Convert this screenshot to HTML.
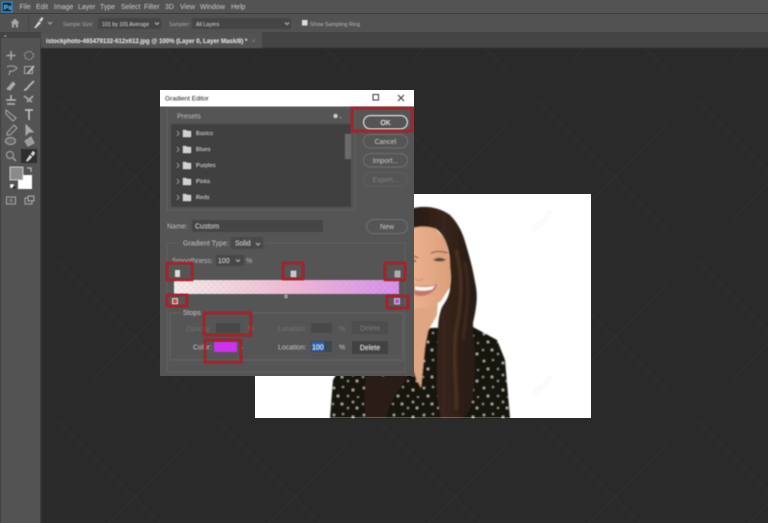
<!DOCTYPE html>
<html><head><meta charset="utf-8"><style>
html,body{margin:0;padding:0;background:#2a2a2a;width:768px;height:523px;overflow:hidden}
svg{display:block}
text{font-family:"Liberation Sans",sans-serif;fill:#c8c8c8}
</style></head><body>
<svg width="768" height="523" viewBox="0 0 768 523" xmlns="http://www.w3.org/2000/svg">
<defs>
<filter id="b" x="-5%" y="-5%" width="110%" height="110%"><feGaussianBlur stdDeviation="0.45"/></filter>
<filter id="b1" x="-5%" y="-5%" width="110%" height="110%"><feGaussianBlur stdDeviation="0.8"/></filter>
<filter id="b2" x="-30%" y="-10%" width="160%" height="120%"><feGaussianBlur stdDeviation="1"/></filter>
<pattern id="wm" width="160" height="160" patternUnits="userSpaceOnUse" x="42" y="255">
<path d="M15 5L145 135M145 30L50 125" stroke="#fff" stroke-opacity=".018" stroke-width="1.500" fill="none"/>
</pattern>
<pattern id="ck" width="6" height="6" patternUnits="userSpaceOnUse" x="174" y="280">
<rect width="3" height="3" fill="#c9c9c9" fill-opacity=".3"/><rect x="3" y="3" width="3" height="3" fill="#c9c9c9" fill-opacity=".3"/>
</pattern>
<pattern id="dots" width="30" height="27" patternUnits="userSpaceOnUse" x="330" y="330">
<g fill="#d8d8d4" fill-opacity=".85"><circle cx="4" cy="4" r="1.100"/><circle cx="13" cy="3" r=".9"/><circle cx="23" cy="6" r="1.200"/><circle cx="28" cy="13" r=".8"/><circle cx="8" cy="12" r="1.200"/><circle cx="18" cy="12" r=".9"/><circle cx="3" cy="20" r=".9"/><circle cx="12" cy="20" r="1.200"/><circle cx="23" cy="18" r="1"/><circle cx="27" cy="24" r="1.200"/><circle cx="18" cy="24" r=".9"/></g>
</pattern>
<linearGradient id="gr" x1="0" x2="1" y1="0" y2="0"><stop offset="0" stop-color="#f6efec"/><stop offset=".5" stop-color="#f4b8d4"/><stop offset="1" stop-color="#d884f0"/></linearGradient>
<linearGradient id="skin" x1="0" x2="1" y1="0" y2="0"><stop offset="0" stop-color="#eab28e"/><stop offset="1" stop-color="#dd9f7c"/></linearGradient>
<linearGradient id="hairg" x1="0" x2="1" y1="0" y2="0"><stop offset="0" stop-color="#261812"/><stop offset=".5" stop-color="#38251b"/><stop offset="1" stop-color="#261912"/></linearGradient>
</defs>

<rect width="768" height="523" fill="#2a2a2a"/>
<rect width="768" height="523" fill="url(#wm)"/>

<!-- chrome -->
<rect width="768" height="13" fill="#535353"/>
<rect y="13" width="768" height="1" fill="#3d3d3d"/>
<rect y="14" width="768" height="18" fill="#525252"/>
<rect y="32" width="768" height="16" fill="#444"/>
<rect y="47.500" width="768" height="1" fill="#333"/>

<!-- image -->
<rect x="255" y="194" width="336" height="224" fill="#fff"/>
<g filter="url(#b1)">
<!-- shirt -->
<path d="M330 418L333 380L345 360L400 345L430 328L473 327L497 340L505 360L510 418Z" fill="#16130f"/>
<path d="M330 418L333 380L345 360L400 345L430 328L473 327L497 340L505 360L510 418Z" fill="url(#dots)"/>
<!-- neck/V -->
<path d="M410 300L438 300L437 315L428 331L425 347L421 388L416 378L410 360Z" fill="#dfa683"/>
<!-- face -->
<path d="M410 226L433 226L446 240L451 267L450 287L441 301L432 307L410 309Z" fill="url(#skin)"/>
<!-- hair -->
<path d="M410 209C420 206 436 205 450 215C458 223 463 233 466 245C470 258 473 270 475 282C478 295 477 305 473 323C473 335 475 345 475 357C475 375 474 390 472 403C470 410 467 414 463 418L441 418C438 405 436 390 437 377C437 360 437 345 438 330C438 320 440 312 442 307C447 300 450 294 450 287C451 280 451 273 450 267C450 255 448 247 445 240C441 232 436 228 433 228C426 226 418 226 410 229Z" fill="url(#hairg)"/>
<path d="M456 250C463 275 462 300 456 330C452 360 458 390 456 410" stroke="#6a4a35" stroke-width="3" fill="none" opacity=".5" filter="url(#b2)"/>
<path d="M465 262C470 285 468 305 463 340" stroke="#5a3e2c" stroke-width="3" fill="none" opacity=".45" filter="url(#b2)"/>
<!-- left lower hair -->
<path d="M366 376L408 376C402 385 394 395 390 405C388 411 387 415 386 418L366 418C364 405 364 390 366 376Z" fill="#2c1c15"/>
<!-- mouth -->
<path d="M414 285C424 287 432 286 437 284C436 291 429 296 420 296C417 296 415 295 414 294Z" fill="#c2766c"/>
<path d="M415 286C423 288 430 287 435 285.500L432 289.500C426 291 420 291 415 290Z" fill="#fbf6f0"/>
<!-- eyes/brows -->
<path d="M433 260C437 257 442 257 446 260C442 262 437 262 433 260Z" fill="#5a473a"/>
<path d="M431 253C436 251 442 251 448 253" stroke="#7a5540" stroke-width="1.100" fill="none"/>
<path d="M410 258C413 256 416 256 418 258" stroke="#7a5540" stroke-width="1.100" fill="none"/>
<path d="M410 261H416" stroke="#6d5849" stroke-width="1.800"/>
<path d="M415 279C418 281 421 281 423 278" stroke="#c68a68" stroke-width="1" fill="none"/>
<text x="535" y="232" font-size="9" font-weight="bold" transform="rotate(-45 535 232)" style="fill:#f6f6f6">iStock</text>
<text x="535" y="397" font-size="9" font-weight="bold" transform="rotate(-45 535 397)" style="fill:#f6f6f6">iStock</text>
</g>

<!-- toolbar -->
<rect x="0" y="32" width="40" height="491" fill="#535353"/>
<rect x="0" y="32" width="1.200" height="491" fill="#444"/>
<rect x="40" y="48" width="1.500" height="475" fill="#3c3c3c"/>
<rect x="0" y="32" width="40" height="6" fill="#444"/>
<text x="4" y="37.500" font-size="5" style="fill:#bbb">«</text>

<g filter="url(#b)">
<!-- PS logo + menu -->
<rect x="2" y="2" width="10" height="10" fill="#0d2a38" stroke="#31a8ff" stroke-width=".8"/>
<text x="3.800" y="9.600" font-size="6.500" font-weight="bold" style="fill:#5cc0f5">Ps</text>
<g font-size="7">
<text x="19.500" y="9">File</text><text x="36" y="9">Edit</text><text x="54" y="9">Image</text><text x="78" y="9">Layer</text><text x="100" y="9">Type</text><text x="121" y="9">Select</text><text x="144" y="9">Filter</text><text x="165" y="9">3D</text><text x="180" y="9">View</text><text x="200" y="9">Window</text><text x="231" y="9">Help</text>
</g>
<!-- option bar -->
<path d="M15 18.500L10.500 23H12V27.500H14V24.500H16V27.500H18V23H19.500Z" fill="#a8a8a8"/>
<rect x="28" y="15" width="1" height="16" fill="#444"/>
<path d="M34 28L39 21L41 23L36 28ZM39 20L42 17L43.500 18.500L41 22Z" fill="#d8d8d8"/>
<path d="M48 22L50 24L52 22" stroke="#aaa" fill="none"/>
<text x="63" y="26" font-size="5.200" style="fill:#aaa">Sample Size:</text>
<rect x="98" y="18" width="63" height="11" fill="#454545"/>
<text x="102" y="26" font-size="5.300" style="fill:#c4c4c4">101 by 101 Average</text>
<path d="M155 22.500L157 24.500L159 22.500" stroke="#aaa" fill="none"/>
<text x="169" y="26" font-size="5.300" style="fill:#aaa">Sampler:</text>
<rect x="192" y="18" width="99" height="11" fill="#454545"/>
<text x="196" y="26" font-size="5.300" style="fill:#c4c4c4">All Layers</text>
<path d="M285 22.500L287 24.500L289 22.500" stroke="#aaa" fill="none"/>
<rect x="302" y="20" width="5.500" height="5.500" fill="#ddd"/>
<text x="310" y="26" font-size="5.400" style="fill:#b8b8b8">Show Sampling Ring</text>
<!-- tab -->
<rect x="41" y="32" width="221" height="16" fill="#535353"/>
<text x="46" y="43" font-size="6.100" font-weight="bold" style="fill:#dcdcdc">istockphoto-465479132-612x612.jpg @ 100% (Layer 0, Layer Mask/8) *</text>
<text x="252" y="43" font-size="6" style="fill:#888">×</text>

<!-- tools -->
<g stroke="#aaa" stroke-width="1" fill="none">
<path d="M11 51V60M6.500 55.500H15.500" stroke-width="1.500"/>
<ellipse cx="29" cy="55.500" rx="4.500" ry="4" stroke-dasharray="2 1"/>
<path d="M7 67C10 65 15 66 17 68C15 71 11 72 10 71L9 75"/>
<rect x="24.500" y="66.500" width="8" height="7"/><path d="M28 73L34 66" stroke-width="1.500" stroke="#ccc"/>
<path d="M7 89L13 82L15 84L10 90Z" fill="#aaa"/>
<path d="M24 90C27 90 28 87 29 86L34 81" stroke-width="1.800" stroke="#bbb"/>
<path d="M6 100H16M7 104H15M11 95V100" stroke-width="1.500" stroke="#bbb"/>
<path d="M24 96L32 102M27 102L33 96" stroke-width="2" stroke="#a0a0a0"/>
<path d="M6 110L16 118L13 121L6 114Z"/>
<path d="M25 110H33M29 110V120" stroke-width="1.500" stroke="#ccc"/>
<path d="M7 133L14 125L17 128L10 135L7 135Z"/>
<path d="M26 125V135L29 132L33 132Z" fill="#aaa"/>
<ellipse cx="10.500" cy="141" rx="5" ry="3.500" fill="#666"/>
<path d="M25 141L31 137L34 143L28 146Z" fill="#999"/>
<circle cx="10" cy="155" r="3.500"/><path d="M13 158L16 161" stroke-width="1.500"/>
</g>
<rect x="21" y="149" width="16" height="14" fill="#2f2f2f"/>
<path d="M26 161L30 155L32 157L28 161ZM31 154L33 151L35 153L33 156Z" fill="#ddd"/>
<!-- colors -->
<rect x="18" y="175" width="14" height="14" fill="#fff"/>
<rect x="10" y="167" width="13" height="13" fill="#8a8a8a" stroke="#ddd" stroke-width=".8"/>
<path d="M27 168H31V172" stroke="#ccc" fill="none"/>
<rect x="10" y="184" width="4" height="4" fill="#fff" stroke="#333" stroke-width=".5"/>
<rect x="12.500" y="186" width="3" height="3" fill="#333"/>
<rect x="6.500" y="197" width="9" height="7" fill="none" stroke="#aaa"/><circle cx="11" cy="200.500" r="2" fill="#777"/>
<rect x="25" y="198" width="7" height="6" fill="none" stroke="#aaa"/><rect x="28" y="196" width="6" height="5" fill="#535353" stroke="#aaa"/>
</g>

<!-- dialog -->
<rect x="160" y="90" width="254" height="286" fill="#555"/>
<rect x="160" y="90" width="254" height="16.500" fill="#fff"/>
<g filter="url(#b)">
<text x="165" y="100.500" font-size="6.500" style="fill:#222">Gradient Editor</text>
<rect x="373" y="94.500" width="5.500" height="5.500" fill="none" stroke="#333"/>
<path d="M398 95L404 101M404 95L398 101" stroke="#333" fill="none"/>
<path d="M167 210V108H355V210Z" fill="none" stroke="#5e5e5e"/>
<rect x="171" y="124" width="180" height="83" fill="#414141"/>
<text x="177" y="118.500" font-size="7" style="fill:#bdbdbd">Presets</text>
<circle cx="335.500" cy="116" r="2.200" fill="#ccc"/>
<rect x="340" y="117" width="1" height="1" fill="#ccc"/>
<rect x="345" y="134" width="6" height="25" fill="#6a6a6a"/>
<g font-size="5.800">
<text x="196" y="135">Basics</text><text x="196" y="151">Blues</text><text x="196" y="167">Purples</text><text x="196" y="183">Pinks</text><text x="196" y="199">Reds</text>
</g>
<g fill="#d0d0d0">
<path d="M183 130H186L187 131H191V137H183Z"/><path d="M183 146H186L187 147H191V153H183Z"/><path d="M183 162H186L187 163H191V169H183Z"/><path d="M183 178H186L187 179H191V185H183Z"/><path d="M183 194H186L187 195H191V201H183Z"/>
</g>
<g stroke="#999" fill="none" stroke-width=".8">
<path d="M177 131L179 133.500L177 136M177 147L179 149.500L177 152M177 163L179 165.500L177 168M177 179L179 181.500L177 184M177 195L179 197.500L177 200"/>
</g>
<!-- buttons -->
<rect x="363.500" y="115.500" width="44" height="13.500" rx="6.700" fill="#555" stroke="#e6e6e6"/>
<text x="385.500" y="125" font-size="7" text-anchor="middle" style="fill:#eee">OK</text>
<rect x="363.500" y="134.500" width="44" height="13.500" rx="6.700" fill="none" stroke="#707070"/>
<text x="385.500" y="144" font-size="7" text-anchor="middle">Cancel</text>
<rect x="363.500" y="153.500" width="44" height="13.500" rx="6.700" fill="none" stroke="#707070"/>
<text x="385.500" y="163" font-size="7" text-anchor="middle">Import...</text>
<rect x="363.500" y="172.500" width="44" height="13.500" rx="6.700" fill="none" stroke="#5e5e5e"/>
<text x="385.500" y="182" font-size="7" text-anchor="middle" style="fill:#7c7c7c">Export...</text>
<!-- name -->
<text x="167" y="228.500" font-size="7" style="fill:#bdbdbd">Name:</text>
<rect x="192" y="220" width="131" height="12" fill="#444"/>
<text x="195" y="228.500" font-size="7" style="fill:#c4c4c4">Custom</text>
<rect x="366.500" y="219.500" width="41" height="14" rx="7" fill="none" stroke="#707070"/>
<text x="387" y="229" font-size="7" text-anchor="middle">New</text>
<path d="M180 243H167V372H405V243H266" fill="none" stroke="#5e5e5e"/>
<text x="183" y="245.500" font-size="7" style="fill:#c4c4c4">Gradient Type:</text>
<rect x="231" y="237" width="32" height="12" fill="#484848"/>
<text x="235" y="245.500" font-size="7">Solid</text>
<path d="M256 243L258 245L260 243" stroke="#aaa" fill="none"/>
<text x="172" y="263" font-size="7" style="fill:#b8b8b8">Smoothness:</text>
<rect x="216" y="255" width="28" height="11" fill="#474747"/>
<text x="218" y="263" font-size="7">100</text>
<path d="M236 259.500L238 261.500L240 259.500" stroke="#aaa" fill="none"/>
<text x="246" y="263" font-size="7" style="fill:#bbb">%</text>
<!-- gradient -->
<rect x="174" y="280" width="225" height="14" fill="url(#gr)"/>
<rect x="174" y="280" width="225" height="14" fill="url(#ck)"/>
<rect x="175" y="270" width="5" height="7" fill="#ddd"/>
<rect x="291" y="271" width="5" height="6" fill="#c8c8c8" stroke="#eee" stroke-width=".5"/>
<rect x="395" y="271" width="5" height="6" fill="#aaa" stroke="#ddd" stroke-width=".5"/>
<circle cx="286" cy="296.500" r="1.300" fill="none" stroke="#ccc" stroke-width=".8"/>
<rect x="172.500" y="298.500" width="5" height="5.500" fill="#c44" stroke="#eee" stroke-width=".8"/>
<rect x="394.500" y="298.500" width="5" height="5.500" fill="#b050e0" stroke="#ddd" stroke-width=".8"/>
<!-- stops -->
<path d="M180 313H170V360H403V313H202" fill="none" stroke="#646464"/>
<text x="183" y="315" font-size="7" style="fill:#c8c8c8">Stops</text>
<text x="186" y="331" font-size="7" style="fill:#6e6e6e">Opacity:</text>
<rect x="216" y="323" width="24" height="10" fill="#464646"/>
<text x="248" y="331" font-size="7" style="fill:#777">%</text>
<text x="278" y="331" font-size="7" style="fill:#757575">Location:</text>
<rect x="311" y="323" width="21" height="10" fill="#484848"/>
<text x="339" y="331" font-size="7" style="fill:#777">%</text>
<rect x="352" y="321" width="36" height="13" fill="#4d4d4d"/>
<text x="370" y="330.500" font-size="7" text-anchor="middle" style="fill:#777">Delete</text>
<text x="193" y="349.500" font-size="7" style="fill:#c4c4c4">Color:</text>
<rect x="214" y="342" width="23" height="10" fill="#cc33f0"/>
<rect x="241" y="347" width="1.500" height="1.500" fill="#bbb"/>
<text x="278" y="349.500" font-size="7" style="fill:#c4c4c4">Location:</text>
<rect x="311" y="341" width="21" height="11" fill="#3c4650"/>
<rect x="312" y="342" width="12" height="9" fill="#1f66b8"/>
<text x="312" y="349.500" font-size="7" style="fill:#eee">100</text>
<text x="339" y="349.500" font-size="7" style="fill:#c4c4c4">%</text>
<rect x="352" y="341" width="36" height="13" fill="#424242"/>
<text x="370" y="350" font-size="7" text-anchor="middle" style="fill:#ddd">Delete</text>
</g>
<!-- red boxes -->
<g fill="none" stroke="#b01a24" stroke-width="2.400" filter="url(#b)">
<rect x="352" y="108" width="60" height="23"/>
<rect x="167" y="263" width="25" height="17"/>
<rect x="283" y="263" width="20" height="16"/>
<rect x="385" y="263" width="20" height="17"/>
<rect x="167" y="295" width="20" height="11"/>
<rect x="387" y="296" width="21" height="12"/>
<rect x="204" y="313" width="47" height="22"/>
<rect x="205" y="340" width="36" height="22"/>
</g>
</svg>
</body></html>
